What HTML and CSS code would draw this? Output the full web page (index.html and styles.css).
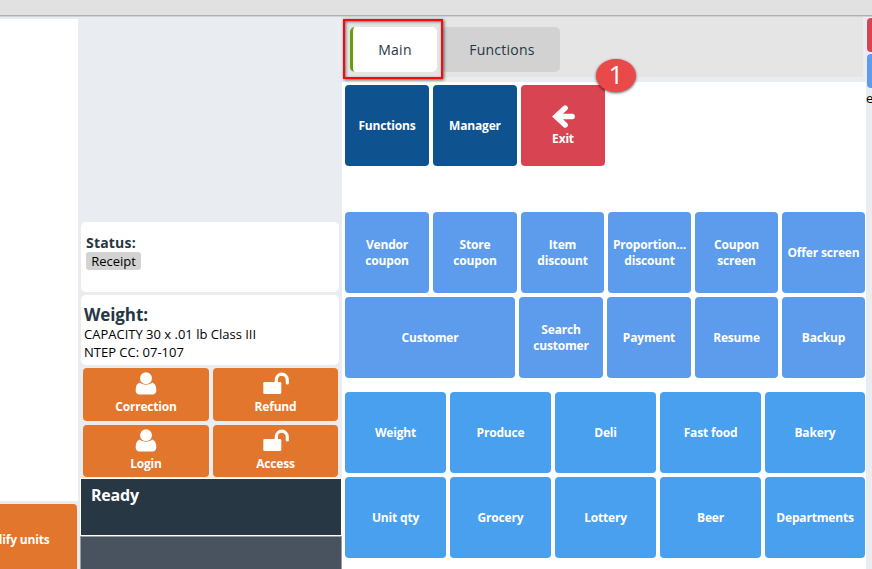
FILE: index.html
```html
<!DOCTYPE html>
<html lang="en">
<head>
<meta charset="utf-8">
<title>Point of sale</title>
<link rel="stylesheet" href="styles.css">
</head>
<body>
<svg class="defs" aria-hidden="true">
  <symbol id="user" viewBox="0 0 22 24">
    <path d="M4.500 11C1.800 11.900 .2 14.500 .2 19c0 2.500 1.500 4.500 4 4.500h13.600c2.500 0 4-2 4-4.500 0-4.500-1.600-7.100-4.300-8-1.500 1.500-3.800 2.200-6.500 2.200s-5-.7-6.500-2.200z"/>
    <circle cx="11" cy="6.500" r="6.200"/>
  </symbol>
  <symbol id="unlock" viewBox="0 0 26 22">
    <rect x=".3" y="9.500" width="18" height="12" rx="1.200"/>
    <path d="M13.300 10V7.200a5.500 5.500 0 0 1 11 0v3.300" class="shackle"/>
  </symbol>
</svg>
<div class="topbar"></div>
<main class="workspace">
  <section class="lines">
    <div class="receipt"></div>
    <button class="btn orange modify"><span>Modify units</span></button>
  </section>
  <section class="side">
    <div class="card status"><h2>Status:</h2><span class="tag">Receipt</span></div>
    <div class="card weight"><h2>Weight:</h2><p>CAPACITY 30 x .01 lb Class III</p><p>NTEP CC: 07-107</p></div>
    <div class="actions">
      <button class="btn orange"><svg class="user"><use href="#user"/></svg><span>Correction</span></button>
      <button class="btn orange"><svg class="unlock"><use href="#unlock"/></svg><span>Refund</span></button>
      <button class="btn orange"><svg class="user"><use href="#user"/></svg><span>Login</span></button>
      <button class="btn orange"><svg class="unlock"><use href="#unlock"/></svg><span>Access</span></button>
    </div>
    <div class="ready">Ready</div>
    <div class="display"></div>
  </section>
  <section class="panel">
    <nav class="tabs"><a class="tab active">Main</a><a class="tab second">Functions</a>
      <div class="highlight"></div><div class="step">1</div>
    </nav>
    <div class="keys">
      <div class="row top">
        <button class="btn navy">Functions</button>
        <button class="btn navy">Manager</button>
        <button class="btn red"><svg class="arrow" viewBox="0 0 23 23"><path d="M13.200 3 4 11.500l9.200 8.500M4.500 11.500h15.700"/></svg><span>Exit</span></button>
      </div>
      <div class="row six">
        <button class="btn blue">Vendor<br>coupon</button>
        <button class="btn blue">Store<br>coupon</button>
        <button class="btn blue">Item<br>discount</button>
        <button class="btn blue">Proportion...<br>discount</button>
        <button class="btn blue">Coupon<br>screen</button>
        <button class="btn blue">Offer screen</button>
      </div>
      <div class="row wide">
        <button class="btn blue">Customer</button>
        <button class="btn blue">Search<br>customer</button>
        <button class="btn blue">Payment</button>
        <button class="btn blue">Resume</button>
        <button class="btn blue">Backup</button>
      </div>
      <div class="row five first">
        <button class="btn sky">Weight</button>
        <button class="btn sky">Produce</button>
        <button class="btn sky">Deli</button>
        <button class="btn sky">Fast food</button>
        <button class="btn sky">Bakery</button>
      </div>
      <div class="row five">
        <button class="btn sky">Unit qty</button>
        <button class="btn sky">Grocery</button>
        <button class="btn sky">Lottery</button>
        <button class="btn sky">Beer</button>
        <button class="btn sky">Departments</button>
      </div>
    </div>
  </section>
  <aside class="edge">
    <div class="btn red"></div>
    <div class="btn blue"></div>
    <span>e</span>
  </aside>
</main>
</body>
</html>
```
FILE: styles.css
```css
* { box-sizing: border-box; }
body {
  margin: 0;
  height: 569px;
  overflow: hidden;
  background: #e9edf1;
  font-family: "Open Sans", sans-serif;
  color: #000;
}
h2, p { margin: 0; }
.defs { display: none; }
.topbar {
  height: 17px;
  background: #e1e1e1;
  border-bottom: 1px solid #cfd2d2;
  box-shadow: inset 0 -1px #afb1af;
}
.workspace {
  display: grid;
  grid-template-columns: 78px 264px 524px 6px;
  height: 552px;
}
.btn {
  display: flex;
  flex-direction: column;
  align-items: center;
  justify-content: center;
  margin: 0;
  padding: 0;
  border: 0;
  border-radius: 4px;
  color: #fff;
  font: 700 12px/16px "Open Sans", sans-serif;
  letter-spacing: -0.18px;
  text-align: center;
  white-space: nowrap;
}
.btn svg { fill: #fff; }
.orange { background: #e1762c; }
.navy { background: #0e538f; }
.red { background: #d94452; }
.blue { background: #5d9cec; }
.sky { background: #48a0ef; }

.lines { display: flex; flex-direction: column; padding-top: 2px; overflow: hidden; }
.receipt { flex: none; height: 482px; background: #fff; }
.modify { width: 128px; height: 70px; margin: 3px 0 0 -51px; padding-top: 2px; flex: none; }

.side { display: flex; flex-direction: column; padding-top: 205px; }
.card { width: 258px; height: 70px; margin-left: 3px; background: #fff; border-radius: 5px; }
.card h2 { color: #273642; font-weight: 700; }
.status { padding: 11px 5px; }
.status h2 { font-size: 14px; line-height: 19px; letter-spacing: .2px; }
.tag {
  display: block;
  width: 55px;
  height: 18px;
  border-radius: 3px;
  background: #d3d3d3;
  font-size: 13px;
  line-height: 18px;
  text-align: center;
}
.weight { margin-top: 3px; padding: 9px 3px; }
.weight h2 { font-size: 17px; line-height: 22px; height: 21px; letter-spacing: -.1px; }
.weight p { font-size: 13px; line-height: 18px; white-space: nowrap; }
.actions {
  display: grid;
  grid-template: 53px 52px / 126px 125px;
  gap: 4px;
  margin: 3px 0 0 5px;
}
.actions .btn { justify-content: flex-start; padding-top: 4px; overflow: hidden; }
.actions svg { height: 23px; margin-bottom: 4px; flex: none; }
.user { width: 22px; }
.unlock { width: 26px; }
.shackle { fill: none; stroke: #fff; stroke-width: 3.200; stroke-linecap: round; }
.ready {
  height: 58px;
  margin: 1px 0 0 2px;
  padding: 5px 10px;
  width: 262px;
  border: 1px solid #fff;
  background: #283744;
  color: #fff;
  font-size: 16px;
  font-weight: 700;
  letter-spacing: -.2px;
  line-height: 22px;
}
.display { flex: 1; width: 262px; margin-left: 2px; border: 1px solid #999da1; border-bottom: 0; background: #48535f; }

.panel { display: flex; flex-direction: column; }
.tabs {
  position: relative;
  display: flex;
  width: 521px;
  height: 60px;
  padding: 10px 8px;
  background: #e5e5e5;
}
.tab {
  height: 45px;
  border-radius: 5px;
  color: #283744;
  font-size: 14px;
  letter-spacing: .25px;
  line-height: 46px;
  text-align: center;
}
.active { width: 87px; background: #fff; border-left: 3px solid #679c0d; }
.second { width: 118px; margin-left: 5px; padding-left: 2px; background: #d2d2d2; }
.highlight {
  position: absolute;
  left: 1px;
  top: 2px;
  width: 100px;
  height: 60px;
  border: 2px solid #f30b0f;
  box-shadow: 1px 1px 3px rgba(0,0,0,.6), inset 1px 1px 3px rgba(0,0,0,.5);
}
.step {
  position: absolute;
  left: 254px;
  top: 42px;
  z-index: 1;
  width: 40px;
  height: 33px;
  border-radius: 50%;
  background: #e94949;
  box-shadow: 0 1px 3px rgba(0,0,0,.65);
  color: #fff;
  font-size: 26px;
  line-height: 31px;
  text-align: center;
}
.keys { flex: 1; margin-top: 5px; padding: 3px 1px 0 3px; background: #fff; }
.row { display: grid; gap: 4px; grid-template-rows: 81px; margin-bottom: 4px; }
.top { grid-template-columns: 84px 84px 84px; margin-bottom: 46px; }
.six { grid-template-columns: 84px 84px 83px 83px 83px 83px; }
.wide { grid-template-columns: 170px 84px 84px 83px 83px; }
.five { grid-template-columns: 101px 101px 101px 101px 100px; }
.first { margin-top: 14px; }
.arrow { width: 23px; height: 23px; margin: 0 0 3px; }
.arrow path { fill: none; stroke: #fff; stroke-width: 5.400; stroke-linecap: round; }

.edge { padding: 1px 0 0 1px; overflow: hidden; }
.edge .btn { width: 30px; height: 34px; margin-bottom: 2px; }
.edge span { display: block; margin-left: -1px; font-size: 13px; line-height: 17px; }
```
